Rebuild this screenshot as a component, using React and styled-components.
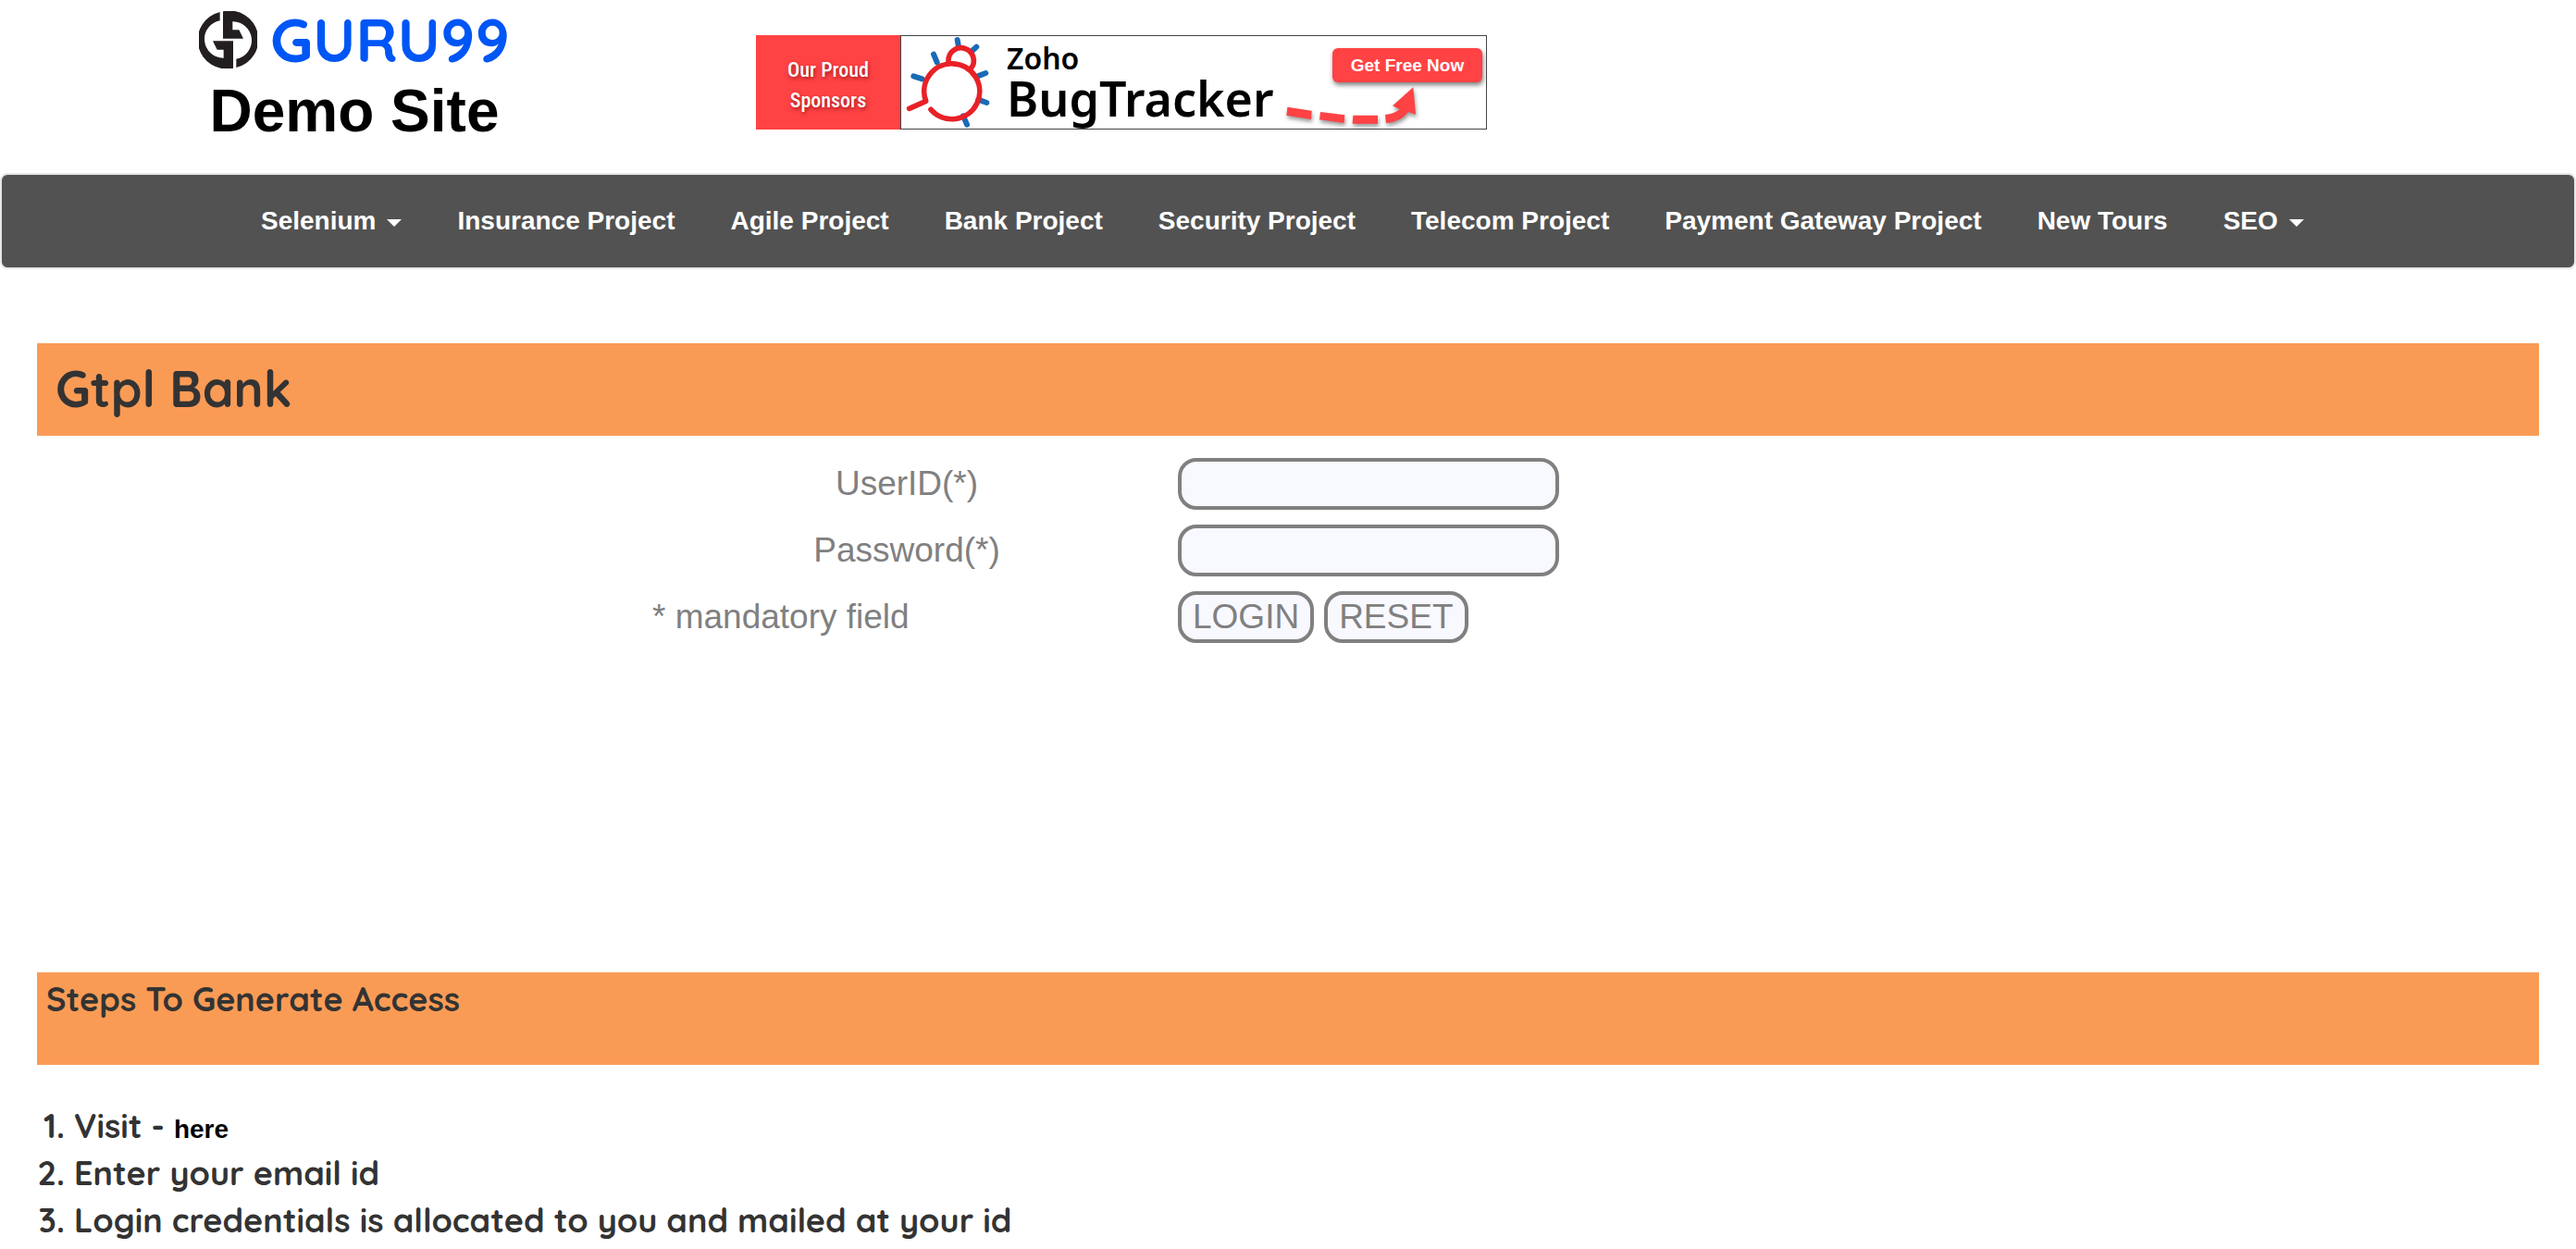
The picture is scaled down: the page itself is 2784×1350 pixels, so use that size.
import React from "react";
import styled, { createGlobalStyle } from "styled-components";

const sans = '"Liberation Sans", Arial, sans-serif';
const rounded = 'Quicksand, "Open Sans", sans-serif';

const GlobalStyle = createGlobalStyle`
  *, *::before, *::after { box-sizing: border-box; }
  body {
    margin: 0;
    background: #fff;
    color: #333;
    font-family: ${sans};
    font-size: 28px;
  }
  a { color: inherit; text-decoration: none; }
`;

const Header = styled.header`
  display: flex;
  align-items: flex-start;
  gap: 265px;
  max-width: 2356px;
  margin: 0 auto;
  padding: 12px 0 31px;
`;

const Brand = styled.a`
  display: flex;
  flex-direction: column;
  align-items: center;
  width: 338px;
  color: #000;
`;

const LogoRow = styled.span`
  display: flex;
  align-items: center;
  gap: 14px;
  height: 62px;
`;

const Wordmark = styled.span`
  color: #0056f5;
  font: 700 66px/62px ${rounded};
`;

const SiteName = styled.span`
  margin-top: 10px;
  font-size: 64px;
  font-weight: 700;
  line-height: 72px;
  white-space: nowrap;
`;

const Banner = styled.a`
  display: flex;
  width: 790px;
  height: 102px;
  margin-top: 26px;
`;

const Sponsors = styled.span`
  display: flex;
  align-items: center;
  justify-content: center;
  width: 156px;
  padding-top: 6px;
  background: #ff4244;
  color: #fff;
  font: 500 22px/33px "Roboto Condensed", Roboto, sans-serif;
  text-align: center;
  text-shadow: 1px 2px 4px rgba(90, 0, 0, 0.6);
`;

const Product = styled.span`
  flex: 1;
  display: flex;
  border: 1px solid #444;
  color: #000;
`;

const ProductName = styled.span`
  display: flex;
  flex-direction: column;
  width: 297px;
  padding: 8px 0 0 14px;
  font-family: "Noto Sans", "Open Sans", sans-serif;
  font-weight: 600;
  white-space: nowrap;
`;

const Maker = styled.span`
  font-size: 32px;
  line-height: 32px;
`;

const Title = styled.span`
  font-size: 52px;
  line-height: 54px;
`;

const Offer = styled.span`
  flex: 1;
  display: flex;
  flex-direction: column;
  padding: 13px 4px 0 16px;
`;

const OfferLabel = styled.span`
  align-self: flex-end;
  width: 162px;
  border-radius: 6px;
  background: #ff4244;
  box-shadow: 1px 3px 5px rgba(0, 0, 0, 0.5);
  color: #fff;
  font-size: 19px;
  font-weight: 700;
  line-height: 37px;
  text-align: center;
`;

const Arrow = styled.svg`
  display: block;
  margin-top: 4px;
  filter: drop-shadow(1px 3px 2px rgba(0, 0, 0, 0.4));
`;

const Nav = styled.nav`
  border: 2px solid #e7e7e7;
  border-radius: 8px;
  background: #525252;
`;

const NavList = styled.ul`
  display: flex;
  max-width: 2280px;
  margin: 0 auto;
  padding: 0;
  list-style: none;
`;

const NavLink = styled.a`
  display: flex;
  align-items: center;
  gap: 12px;
  padding: 30px;
  color: #fff;
  font-weight: 700;
  line-height: 40px;
  white-space: nowrap;
`;

const Caret = styled.span`
  border-top: 8px solid;
  border-left: 8px solid transparent;
  border-right: 8px solid transparent;
  margin-top: 4px;
`;

const Main = styled.main`
  padding: 80px 40px 0;
`;

const Bar = styled.div`
  min-height: 100px;
  padding: ${(p) => (p.$compact ? "6px 10px" : "15px 20px")};
  background: #fa9b55;
  font-family: ${rounded};
`;

const PageTitle = styled.h1`
  margin: 0;
  font-size: 54px;
  font-weight: 700;
  line-height: 68px;
`;

const StepsTitle = styled.h2`
  margin: 0;
  font-size: 36px;
  font-weight: 700;
  line-height: 45px;
`;

const LoginForm = styled.form`
  display: grid;
  grid-template-columns: 550px 1fr;
  gap: 16px 18px;
  max-width: 1374px;
  margin: 24px auto 356px;
  color: gray;
  font-size: 37px;
  line-height: 56px;
`;

const FieldLabel = styled.label`
  text-align: center;
`;

const Note = styled.span`
  white-space: nowrap;
`;

const Field = styled.input`
  width: 412px;
  height: 56px;
  padding: 4px 12px;
  border: 4px solid gray;
  border-radius: 20px;
  background: ghostwhite;
  color: gray;
  font: inherit;
`;

const Actions = styled.div`
  display: flex;
  gap: 11px;
`;

const Action = styled.button`
  height: 56px;
  padding: 0 12px;
  border: 4px solid gray;
  border-radius: 20px;
  background: ghostwhite;
  color: gray;
  font: 37px/44px ${sans};
`;

const Steps = styled.ol`
  margin: 40px 0 0;
  padding: 0 0 0 40px;
  font: 700 36px/51px ${rounded};
`;

const HereLink = styled.a`
  color: #000;
  font: 700 28px/40px ${sans};
`;

const menu = [
  { text: "Selenium", caret: true },
  { text: "Insurance Project" },
  { text: "Agile Project" },
  { text: "Bank Project" },
  { text: "Security Project" },
  { text: "Telecom Project" },
  { text: "Payment Gateway Project" },
  { text: "New Tours" },
  { text: "SEO", caret: true },
];

// The mark is one half ring, drawn twice around its centre.
const halfRing =
  "M140 38 A93 93 0 0 0 183 220 L183 132 L117 132 L131 160 L152 160 L152 187 A61 61 0 0 1 140 66 Z";

function GuruIcon() {
  return (
    <svg width="63" height="62" viewBox="72 35 189 186" fill="#231f20" aria-hidden="true">
      <path d={halfRing} />
      <path d={halfRing} transform="rotate(180 166.5 128)" />
    </svg>
  );
}

function Bug() {
  return (
    <svg width="100" height="100" viewBox="522 57 300 300" fill="none" strokeLinecap="round" aria-hidden="true">
      <path
        stroke="#1a6bb5"
        strokeWidth="18"
        d="M704 69 L708 92 M766 92 L752 105 M627 116 L638 142 M562 187 L590 196 M796 177 L770 187 M799 273 L772 263 M735 344 L723 316"
      />
      <path stroke="#e82127" strokeWidth="17" d="M675 138 A41 41 0 1 1 748 162" />
      <path
        stroke="#e82127"
        strokeWidth="17"
        strokeLinejoin="round"
        d="M618 295 A90 90 0 1 0 602 268 L548 292"
      />
    </svg>
  );
}

function DashedArrow() {
  return (
    <Arrow width="147" height="45" viewBox="560 220 441 135" fill="#ff4244" aria-hidden="true">
      <path d="M573 288 L652 300 L650 328 L570 315 Z M680 304 L759 314 L757 340 L677 329 Z M786 315 L866 315 L866 342 L784 342 Z" />
      <path d="M890 313 Q920 310 937 296 L914 284 L981 224 L989 312 L965 304 Q942 336 893 340 Z" />
    </Arrow>
  );
}

export default function App() {
  return (
    <>
      <GlobalStyle />
      <Header>
        <Brand href="#home">
          <LogoRow>
            <GuruIcon />
            <Wordmark>GURU99</Wordmark>
          </LogoRow>
          <SiteName>Demo Site</SiteName>
        </Brand>
        <Banner href="#bugtracker">
          <Sponsors>
            Our Proud
            <br />
            Sponsors
          </Sponsors>
          <Product>
            <Bug />
            <ProductName>
              <Maker>Zoho</Maker>
              <Title>BugTracker</Title>
            </ProductName>
            <Offer>
              <OfferLabel>Get Free Now</OfferLabel>
              <DashedArrow />
            </Offer>
          </Product>
        </Banner>
      </Header>
      <Nav>
        <NavList>
          {menu.map(({ text, caret }) => (
            <li key={text}>
              <NavLink href="#menu">
                {text}
                {caret && <Caret />}
              </NavLink>
            </li>
          ))}
        </NavList>
      </Nav>
      <Main>
        <Bar>
          <PageTitle>Gtpl Bank</PageTitle>
        </Bar>
        <LoginForm onSubmit={(event) => event.preventDefault()}>
          <FieldLabel htmlFor="user">UserID(*)</FieldLabel>
          <Field id="user" type="text" />
          <FieldLabel htmlFor="password">Password(*)</FieldLabel>
          <Field id="password" type="password" />
          <Note>* mandatory field</Note>
          <Actions>
            <Action type="submit">LOGIN</Action>
            <Action type="reset">RESET</Action>
          </Actions>
        </LoginForm>
        <Bar $compact>
          <StepsTitle>Steps To Generate Access</StepsTitle>
        </Bar>
        <Steps>
          <li>
            Visit - <HereLink href="#here">here</HereLink>
          </li>
          <li>Enter your email id</li>
          <li>Login credentials is allocated to you and mailed at your id</li>
        </Steps>
      </Main>
    </>
  );
}
